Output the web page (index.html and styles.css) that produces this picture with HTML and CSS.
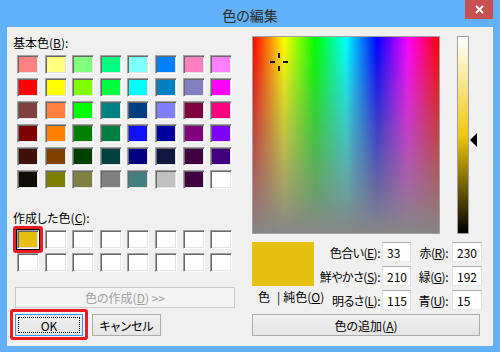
FILE: index.html
```html
<!DOCTYPE html>
<html>
<head>
    <title>色の編集</title>
    <link rel="stylesheet" href="styles.css">
</head>
<body>
    <div class="window">
        <div class="titlebar">
            <div class="title">色の編集</div>
            <div class="close">
                <svg width="9" height="9" viewBox="0 0 9 9"><path d="M1 1L8 8M8 1L1 8" stroke="#fff" stroke-width="1.8"/></svg>
            </div>
        </div>

        <div class="dialog">
            <div class="left">
                <div class="label">基本色(<u>B</u>):</div>
                <div class="swatches">
                    <div class="sw" style="background:#ff8080"></div>
                    <div class="sw" style="background:#ffff80"></div>
                    <div class="sw" style="background:#80ff80"></div>
                    <div class="sw" style="background:#00ff80"></div>
                    <div class="sw" style="background:#80ffff"></div>
                    <div class="sw" style="background:#0080ff"></div>
                    <div class="sw" style="background:#ff80c0"></div>
                    <div class="sw" style="background:#ff80ff"></div>

                    <div class="sw" style="background:#ff0000"></div>
                    <div class="sw" style="background:#ffff00"></div>
                    <div class="sw" style="background:#80ff00"></div>
                    <div class="sw" style="background:#00ff40"></div>
                    <div class="sw" style="background:#00ffff"></div>
                    <div class="sw" style="background:#0080c0"></div>
                    <div class="sw" style="background:#8080c0"></div>
                    <div class="sw" style="background:#ff00ff"></div>

                    <div class="sw" style="background:#804040"></div>
                    <div class="sw" style="background:#ff8040"></div>
                    <div class="sw" style="background:#00ff00"></div>
                    <div class="sw" style="background:#008080"></div>
                    <div class="sw" style="background:#004080"></div>
                    <div class="sw" style="background:#8080ff"></div>
                    <div class="sw" style="background:#800040"></div>
                    <div class="sw" style="background:#ff0080"></div>

                    <div class="sw" style="background:#800000"></div>
                    <div class="sw" style="background:#ff8000"></div>
                    <div class="sw" style="background:#008000"></div>
                    <div class="sw" style="background:#008040"></div>
                    <div class="sw" style="background:#1010ff"></div>
                    <div class="sw" style="background:#0000a0"></div>
                    <div class="sw" style="background:#800080"></div>
                    <div class="sw" style="background:#8000ff"></div>

                    <div class="sw" style="background:#401008"></div>
                    <div class="sw" style="background:#804000"></div>
                    <div class="sw" style="background:#004000"></div>
                    <div class="sw" style="background:#004040"></div>
                    <div class="sw" style="background:#000080"></div>
                    <div class="sw" style="background:#101840"></div>
                    <div class="sw" style="background:#400040"></div>
                    <div class="sw" style="background:#400080"></div>

                    <div class="sw" style="background:#100c08"></div>
                    <div class="sw" style="background:#808000"></div>
                    <div class="sw" style="background:#808040"></div>
                    <div class="sw" style="background:#808080"></div>
                    <div class="sw" style="background:#408080"></div>
                    <div class="sw" style="background:#c0c0c0"></div>
                    <div class="sw" style="background:#400040"></div>
                    <div class="sw" style="background:#ffffff"></div>
                </div>

                <div class="label custom-label">作成した色(<u>C</u>):</div>
                <div class="swatches custom">
                    <div class="sw selected mark" style="background:#e6c00f"></div>
                    <div class="sw"></div><div class="sw"></div><div class="sw"></div>
                    <div class="sw"></div><div class="sw"></div><div class="sw"></div><div class="sw"></div>
                    <div class="sw"></div><div class="sw"></div><div class="sw"></div><div class="sw"></div>
                    <div class="sw"></div><div class="sw"></div><div class="sw"></div><div class="sw"></div>
                </div>

                <button class="btn define" disabled>色の作成(<u>D</u>) &gt;&gt;</button>

                <div class="actions">
                    <button class="btn ok mark">OK</button>
                    <button class="btn cancel">キャンセル</button>
                </div>
            </div>

            <div class="right">
                <div class="picker">
                    <div class="spectrum">
                        <svg class="cross" width="18" height="18" viewBox="0 0 18 18">
                            <rect x="8" y="0" width="2" height="5" fill="#111"/>
                            <rect x="8" y="13" width="2" height="5" fill="#111"/>
                            <rect x="0" y="8" width="5" height="2" fill="#111"/>
                            <rect x="13" y="8" width="5" height="2" fill="#111"/>
                        </svg>
                    </div>
                    <div class="lum-wrap">
                        <div class="lum"></div>
                        <svg class="arrow" width="8" height="14" viewBox="0 0 8 14"><polygon points="0,7 7,0 7,14" fill="#000"/></svg>
                    </div>
                </div>

                <div class="info">
                    <div class="preview-col">
                        <div class="preview"></div>
                        <div class="solid">
                            <span>色</span><span class="bar">|</span><span>純色(<u>O</u>)</span>
                        </div>
                    </div>

                    <div class="fields">
                        <div class="field-label">色合い(<u>E</u>):</div>
                        <input type="text" value="33">
                        <div class="field-label second">赤(<u>R</u>):</div>
                        <input type="text" value="230">

                        <div class="field-label">鮮やかさ(<u>S</u>):</div>
                        <input type="text" value="210">
                        <div class="field-label second">緑(<u>G</u>):</div>
                        <input type="text" value="192">

                        <div class="field-label">明るさ(<u>L</u>):</div>
                        <input type="text" value="115">
                        <div class="field-label second">青(<u>U</u>):</div>
                        <input type="text" value="15">
                    </div>
                </div>

                <button class="btn add">色の追加(<u>A</u>)</button>
            </div>
        </div>
    </div>
</body>
</html>
```

FILE: styles.css
```css
* {
    box-sizing: border-box;
}

body {
    margin: 0;
    font-family: "Noto Sans CJK JP", sans-serif;
    font-size: 12px;
    font-feature-settings: "palt";
    color: #000;
}

.window {
    width: 500px;
    height: 352px;
    background: #62b0f8;
    display: flex;
    flex-direction: column;
    overflow: hidden;
}

.titlebar {
    height: 27px;
    display: grid;
    grid-template-columns: 1fr auto 1fr;
}

.title {
    grid-column: 2;
    align-self: center;
    font-size: 14px;
    color: #2b2b2b;
    padding-top: 2px;
}

.close {
    grid-column: 3;
    justify-self: end;
    width: 28px;
    height: 19px;
    margin-right: 7px;
    background: #c75050;
    display: flex;
    align-items: center;
    justify-content: center;
}

.dialog {
    flex: 1;
    margin: 0 7px 6px;
    background: #f0f0f0;
    display: flex;
}

/* left column */
.left {
    width: 245px;
    flex-shrink: 0;
    padding: 8px 0 0 6px;
    display: flex;
    flex-direction: column;
    align-items: flex-start;
}

.label {
    line-height: 16px;
    white-space: nowrap;
}

.swatches {
    margin: 4px 0 0 4px;
    display: grid;
    grid-template-columns: repeat(8, 22px);
    column-gap: 5.6px;
    row-gap: 4px;
}

.sw {
    width: 22px;
    height: 19px;
    background: #fff;
    border: 1px solid;
    border-color: #a0a0a0 #fff #fff #a0a0a0;
    box-shadow: inset 1px 1px #696969, inset -1px -1px #e3e3e3;
}

.custom-label {
    margin-top: 21px;
}

.sw.selected {
    outline: 1px solid #000;
}

.mark {
    position: relative;
}

.mark::after {
    content: "";
    position: absolute;
    inset: -5px;
    border: 3px solid #ec1c24;
    border-radius: 3px;
}

.btn {
    font: inherit;
    font-feature-settings: "palt";
    color: #000;
    padding: 0;
    border: 1px solid #acacac;
    border-radius: 0;
    background: linear-gradient(#f0f0f0, #e5e5e5);
}

.define {
    margin: 15px 0 0 2px;
    width: 220px;
    height: 21px;
    color: #a0a0a0;
    border-color: #c9c9c9;
    background: #f4f4f4;
}

.actions {
    margin: 6px 0 0 2px;
    display: flex;
    gap: 9px;
}

.ok {
    width: 68px;
    height: 22px;
    border-color: #3399ff;
    outline: 1px dotted #000;
    outline-offset: -4px;
}

.ok::after {
    inset: -6px -6px -5px -6px;
}

.cancel {
    width: 69px;
    height: 22px;
}

/* right column */
.right {
    flex: 1;
    min-width: 0;
    padding: 9px 11px 0 0;
    display: flex;
    flex-direction: column;
}

.picker {
    display: flex;
    height: 198px;
}

.spectrum {
    width: 188px;
    height: 198px;
    position: relative;
    border: 1px solid #a0a0a0;
    background:
        linear-gradient(to bottom, rgba(134, 134, 134, 0), #868686),
        linear-gradient(to right, #f00, #ff0 16.7%, #0f0 33.3%, #0ff 50%, #00f 66.7%, #f0f 83.3%, #f00);
}

.cross {
    position: absolute;
    left: 17px;
    top: 16px;
}

.lum-wrap {
    margin-left: 17px;
    width: 12px;
    position: relative;
}

.lum {
    height: 198px;
    border: 1px solid #a0a0a0;
    background: linear-gradient(to bottom, #fff, #efc810 50%, #000);
}

.arrow {
    position: absolute;
    left: 13px;
    top: 97px;
}

.info {
    margin-top: 8px;
    display: flex;
    justify-content: space-between;
}

.preview-col {
    width: 62px;
    flex-shrink: 0;
}

.preview {
    width: 62px;
    height: 44px;
    background: #e6c00f;
}

.solid {
    margin: 3px 0 0 6px;
    display: flex;
    line-height: 16px;
    white-space: nowrap;
}

.solid .bar {
    margin: 0 3px 0 7px;
}

.fields {
    display: grid;
    grid-template-columns: 58px 29px 37px 30px;
    column-gap: 2px;
    row-gap: 4px;
    align-items: center;
}

.field-label {
    display: flex;
    justify-content: flex-end;
    white-space: nowrap;
    letter-spacing: -0.5px;
}

.field-label.second {
    padding-right: 2px;
}

.fields input {
    width: 100%;
    height: 20px;
    font: inherit;
    padding: 0 0 0 4px;
    border: 1px solid;
    border-color: #abadb3 #dbdfe6 #e3e9ef #e2e3ea;
    background: #fff;
    color: #000;
}

.add {
    margin-top: 4px;
    width: 228px;
    height: 22px;
}
```
